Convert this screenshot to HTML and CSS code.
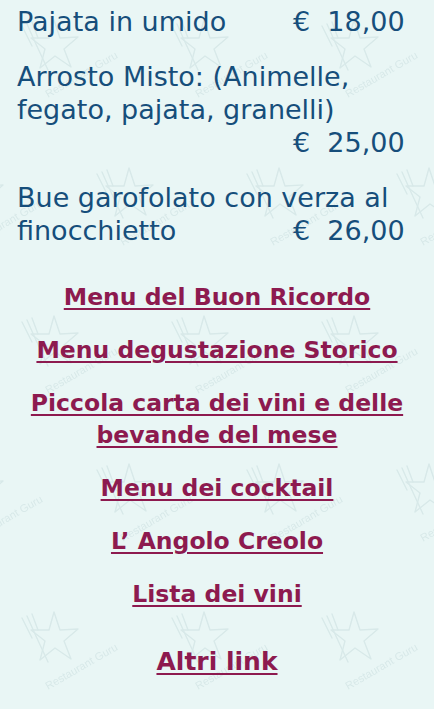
FILE: index.html
```html
<!DOCTYPE html>
<html lang="it">
<head>
<meta charset="utf-8">
<title>Menu</title>
<link rel="stylesheet" href="styles.css">
</head>
<body>
<main class="page">
  <section class="dishes">
    <div class="dish">
      <div class="row"><span>Pajata in umido</span><span class="price">€&nbsp; 18,00</span></div>
    </div>
    <div class="dish">
      <div>Arrosto Misto: (Animelle,</div>
      <div>fegato, pajata, granelli)</div>
      <div class="row"><span></span><span class="price">€&nbsp; 25,00</span></div>
    </div>
    <div class="dish">
      <div>Bue garofolato con verza al</div>
      <div class="row"><span>finocchietto</span><span class="price">€&nbsp; 26,00</span></div>
    </div>
  </section>
  <nav class="links">
    <a href="#">Menu del Buon Ricordo</a>
    <a href="#">Menu degustazione Storico</a>
    <a href="#">Piccola carta dei vini e delle bevande del mese</a>
    <a href="#">Menu dei cocktail</a>
    <a href="#">L’ Angolo Creolo</a>
    <a href="#">Lista dei vini</a>
    <a href="#" class="more">Altri link</a>
  </nav>
</main>
</body>
</html>
```
FILE: styles.css
```css
html, body {
  margin: 0;
  padding: 0;
}
body {
  font-family: "DejaVu Sans", "Liberation Sans", Arial, sans-serif;
  width: 434px;
  height: 709px;
  overflow: hidden;
  background-color: #e9f6f5;
  background-image: url("data:image/svg+xml,%3Csvg xmlns='http://www.w3.org/2000/svg' width='150' height='296' viewBox='0 0 150 296'%3E%3Cdefs%3E%3Cg id='l' fill='none' stroke='%23d8e9e9' stroke-width='1.4' stroke-linejoin='round' stroke-linecap='round'%3E%3Cpath d='M36 2 L42 20 L60 19 L46 31 L53 49 L37 38 L22 50 L27 31 L13 20 L31 20 Z'/%3E%3Cpath d='M4 8 L14 28 M9 6 L17 24 M14 4 L20 20 M17 24 L30 52'/%3E%3Ctext x='30' y='80' transform='rotate(-30 30 80)' font-family='Liberation Sans, Arial, sans-serif' font-size='11' fill='%23d8e9e9' stroke='none'%3ERestaurant Guru%3C/text%3E%3C/g%3E%3C/defs%3E%3Cuse href='%23l' x='18' y='14'/%3E%3Cuse href='%23l' x='93' y='162'/%3E%3Cuse href='%23l' x='-57' y='162'/%3E%3C/svg%3E");
  background-size: 150px 296px;
  background-position: 0 4px;
}
.page {
  padding: 5px 29px 0 17px;
}
.dishes {
  color: #164e7b;
  font-size: 27px;
  line-height: 33px;
}
.dish {
  margin: 0 0 22px 0;
  white-space: nowrap;
}
.row {
  display: flex;
  justify-content: space-between;
}
.price {
  width: 112px;
}
.links {
  display: flex;
  flex-direction: column;
  align-items: center;
  text-align: center;
  gap: 21px;
  margin-top: 34px;
  margin-right: -12px;
}
.links a {
  color: #8d1a4f;
  font-weight: bold;
  font-size: 23.5px;
  line-height: 32px;
  text-decoration-thickness: 2px;
  text-underline-offset: 3px;
}
.links a.more {
  font-size: 25px;
  margin-top: 15px;
}
```
